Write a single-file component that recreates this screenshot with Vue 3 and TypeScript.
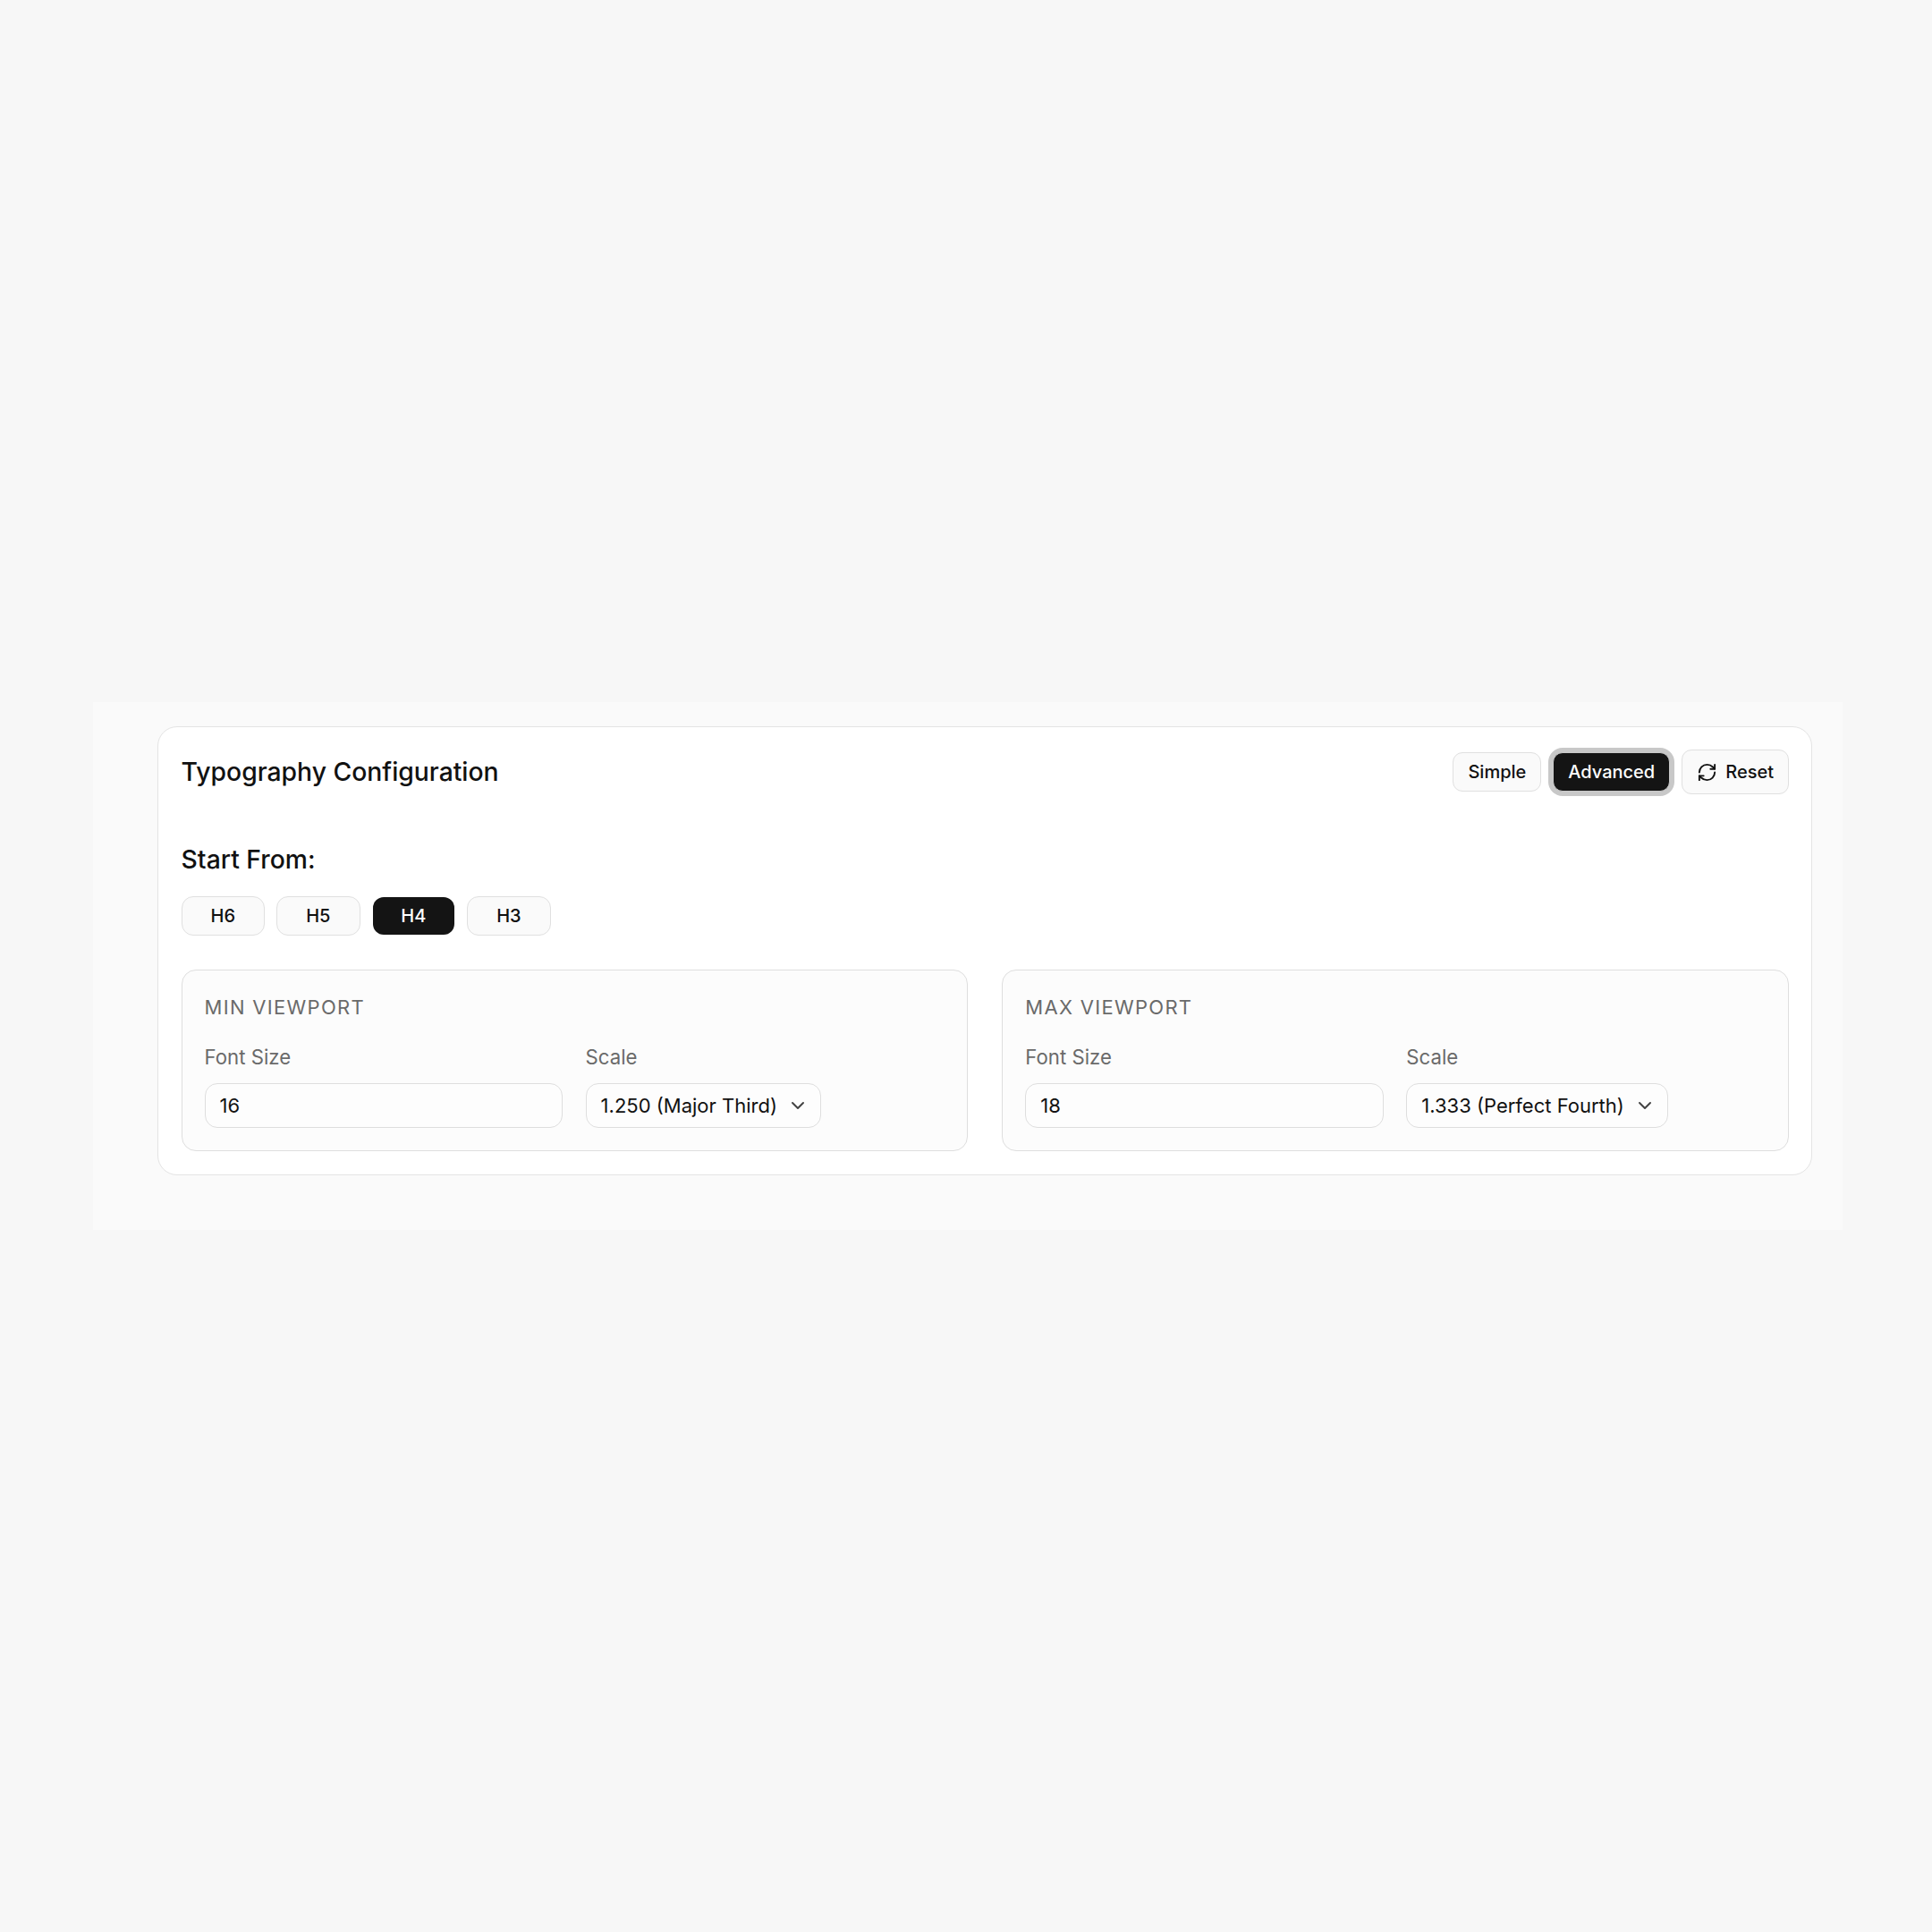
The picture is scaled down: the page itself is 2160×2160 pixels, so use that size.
<script setup lang="ts">
interface Panel { title: string; size: string; scale: string }
const panels: Panel[] = [
  { title: 'MIN VIEWPORT', size: '16', scale: '1.250 (Major Third)' },
  { title: 'MAX VIEWPORT', size: '18', scale: '1.333 (Perfect Fourth)' },
]
const levels = ['H6', 'H5', 'H4', 'H3']
const active = 'H4'
</script>

<template>
  <div class="page">
    <div class="wrap">
      <section class="card">
        <header class="head">
          <h2 class="title">Typography Configuration</h2>
          <div class="actions">
            <button class="btn btn-simple">Simple</button>
            <button class="btn btn-on">Advanced</button>
            <button class="btn btn-reset">
              <svg class="ico" viewBox="0 0 24 24" fill="none" stroke="currentColor" stroke-width="2" stroke-linecap="round" stroke-linejoin="round">
                <path d="M3 12a9 9 0 0 1 9-9 9.75 9.75 0 0 1 6.74 2.74L21 8" />
                <path d="M21 3v5h-5" />
                <path d="M21 12a9 9 0 0 1-9 9 9.75 9.75 0 0 1-6.74-2.74L3 16" />
                <path d="M8 16H3v5" />
              </svg>
              Reset
            </button>
          </div>
        </header>

        <div class="start-label">Start From:</div>
        <div class="levels">
          <button v-for="l in levels" :key="l" class="lvl" :class="{ 'lvl-on': l === active }">{{ l }}</button>
        </div>

        <div class="panels">
          <div v-for="p in panels" :key="p.title" class="panel">
            <div class="panel-title">{{ p.title }}</div>
            <div class="fields">
              <label class="field field-size">
                <span class="lab">Font Size</span>
                <input class="ctl input" :value="p.size" />
              </label>
              <div class="field">
                <span class="lab">Scale</span>
                <div class="ctl select">
                  <span>{{ p.scale }}</span>
                  <svg class="chev" viewBox="0 0 24 24" fill="none" stroke="#444" stroke-width="2" stroke-linecap="round" stroke-linejoin="round">
                    <path d="m6 9 6 6 6-6" />
                  </svg>
                </div>
              </div>
            </div>
          </div>
        </div>
      </section>
    </div>
  </div>
</template>

<style>
html, body { margin: 0; background: #f7f7f7; }
</style>

<style scoped>
.page {
  min-height: 2160px;
  padding: 785px 100px 0 104px;
  box-sizing: border-box;
  background: #f7f7f7;
  font-family: Inter, "Liberation Sans", sans-serif;
  color: #111;
}
.wrap {
  width: 1956px;
  box-sizing: border-box;
  padding: 27px 34px 61px 72px;
  background: #fafafa;
}
.card {
  box-sizing: border-box;
  background: #fff;
  border: 1.5px solid #e4e4e4;
  border-radius: 22px;
  padding: 25px 25px 25.5px 25.6px;
}
.head {
  display: flex;
  align-items: center;
  justify-content: space-between;
  height: 50px;
  margin-bottom: 53px;
}
.title {
  margin: 0;
  font-size: 28.3px;
  font-weight: 450;
  line-height: 40px;
}
.actions {
  display: flex;
  align-items: center;
  gap: 11.5px;
}
.btn, .lvl {
  box-sizing: border-box;
  font-family: inherit;
  font-size: 20px;
  font-weight: 450;
  color: #111;
  background: #fafafa;
  border: 1.5px solid #e0e0e0;
  border-radius: 11px;
  padding: 0;
  display: flex;
  align-items: center;
  justify-content: center;
}
.btn {
  height: 44px;
  padding: 0 16px;
}
.btn-on {
  background: #141414;
  color: #fff;
  border-color: #c8c8c8;
  box-shadow: 0 0 0 5px #c8c8c8;
  margin: 0 1.5px;
}
.btn-reset {
  height: 50px;
  gap: 9px;
  padding: 0 16px;
}
.ico {
  width: 23px;
  height: 23px;
  flex: none;
}
.start-label {
  font-size: 28.3px;
  font-weight: 450;
  line-height: 40px;
  margin-bottom: 21px;
}
.levels {
  display: flex;
  gap: 13px;
  margin-bottom: 37.5px;
}
.lvl {
  width: 93.5px;
  height: 44px;
  border-radius: 13px;
}
.lvl-on {
  background: #141414;
  background-clip: padding-box;
  border-color: transparent;
  color: #fff;
}
.panels {
  display: grid;
  grid-template-columns: 1fr 1fr;
  gap: 38px;
}
.panel {
  box-sizing: border-box;
  height: 203.5px;
  background: #fcfcfc;
  border: 1.5px solid #dedede;
  border-radius: 16px;
  padding: 25px;
}
.panel-title {
  font-size: 22px;
  font-weight: 400;
  letter-spacing: 1.3px;
  color: #6a6a6a;
  line-height: 32px;
  margin-bottom: 25px;
}
.fields {
  display: flex;
  gap: 25.5px;
}
.field {
  display: flex;
  flex-direction: column;
  gap: 14px;
}
.field-size {
  width: 400.5px;
}
.lab {
  font-size: 22.2px;
  line-height: 30px;
  color: #6a6a6a;
}
.ctl {
  box-sizing: border-box;
  height: 50px;
  background: #fdfdfd;
  border: 1.5px solid #dedede;
  border-radius: 14px;
  font-family: inherit;
  font-size: 22px;
  color: #111;
}
.input {
  width: 100%;
  padding: 0 16px;
  outline: none;
}
.select {
  display: flex;
  align-items: center;
  gap: 11px;
  padding: 0 13px 0 16px;
  white-space: nowrap;
}
.chev {
  width: 24px;
  height: 24px;
  flex: none;
}
</style>
